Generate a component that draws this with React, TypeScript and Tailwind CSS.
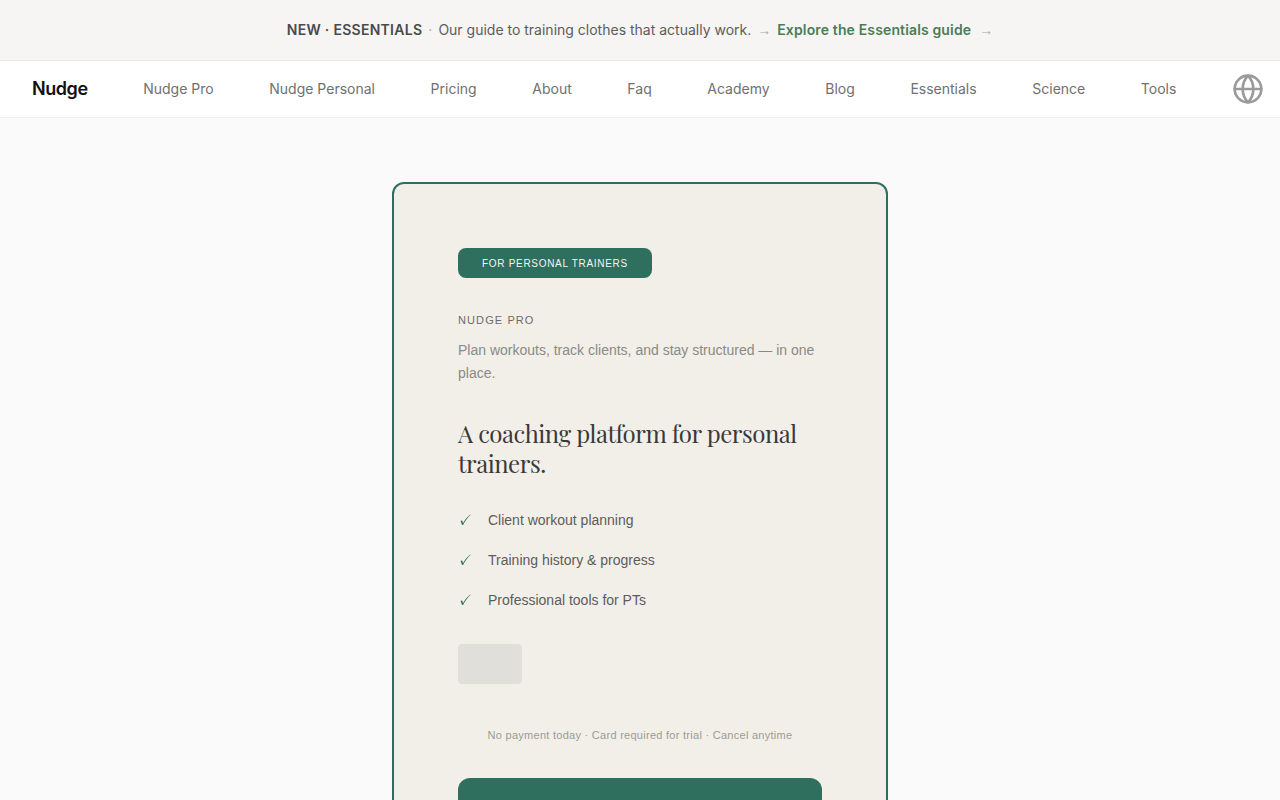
import { Globe } from "lucide-react";

const navLinks = [
  "Nudge Pro",
  "Nudge Personal",
  "Pricing",
  "About",
  "Faq",
  "Academy",
  "Blog",
  "Essentials",
  "Science",
  "Tools",
];

const features = [
  "Client workout planning",
  "Training history & progress",
  "Professional tools for PTs",
];

const CheckMark = () => {
  return (
    <svg
      viewBox="0 0 14 14"
      className="h-3.5 w-3.5 shrink-0 fill-[#2f6f5e]"
      aria-hidden="true"
    >
      <path d="M2.4 8.2 C3 7.2 4.2 7.2 4.5 8.2 L5 10.2 C6.8 7 9.2 4 12.3 1.6 L12.6 1.8 C9.6 4.8 7 8.2 5.2 11.8 L4 12 L3.2 9.4 C3 8.6 2.8 8.4 2.4 8.2 Z" />
    </svg>
  );
};

const AnnouncementBar = () => {
  return (
    <div className="flex items-center justify-center border-b border-[#ebebe8] bg-[#f6f5f3] px-4 py-5 text-sm text-[#5c5c5c]">
      <strong className="font-semibold tracking-[0.02em] text-[#4a4a4a]">
        NEW · ESSENTIALS
      </strong>
      <span className="mx-1.5 text-[#a8a8a8]">·</span>
      <span>Our guide to training clothes that actually work.</span>
      <span className="mx-1.5 font-['Liberation_Sans',sans-serif] text-[#a8a8a8]">
        →
      </span>
      <a
        href="#essentials"
        className="font-semibold tracking-[0.01em] text-[#4a7c59]"
      >
        Explore the Essentials guide
      </a>
      <span className="ml-2 font-['Liberation_Sans',sans-serif] text-[#a8a8a8]">
        →
      </span>
    </div>
  );
};

const Navbar = () => {
  return (
    <header className="border-b border-[#f0f0f0] bg-white">
      <nav className="flex h-14 items-center justify-between pr-4 pl-8 whitespace-nowrap">
        <a
          href="#home"
          className="text-lg font-semibold tracking-tight text-[#111111]"
        >
          Nudge
        </a>
        {navLinks.map((link) => (
          <a key={link} href="#" className="text-sm text-[#707070]">
            {link}
          </a>
        ))}
        <button
          type="button"
          aria-label="Language"
          className="shrink-0 text-[#9b9b9b]"
        >
          <Globe size={32} />
        </button>
      </nav>
    </header>
  );
};

const PlanCard = () => {
  return (
    <section className="w-full max-w-[496px] rounded-xl border-2 border-[#2f6f5e] bg-[#f2efe9] p-16 font-['Liberation_Sans',sans-serif]">
      <span className="inline-block rounded-lg bg-[#2f6f5e] px-6 pt-[9px] pb-[7px] text-[10px] leading-[14px] tracking-[0.07em] text-[#f7f5f2] uppercase">
        For personal trainers
      </span>
      <p className="mt-8 text-[11px] leading-5 tracking-widest text-[#6b6b6b] uppercase">
        Nudge Pro
      </p>
      <p className="mt-[9px] text-sm leading-[23px] text-[#8a8a85]">
        Plan workouts, track clients, and stay structured — in one place.
      </p>
      <h2 className="mt-[33px] font-['Playfair_Display','Liberation_Serif',serif] text-2xl leading-[30px] tracking-[-0.02em] text-[#3a3a3a]">
        A coaching platform for personal trainers.
      </h2>
      <ul className="mt-[30px] space-y-4 text-sm leading-6 text-[#5c5c5c]">
        {features.map((feature) => (
          <li key={feature} className="flex items-center gap-4">
            <CheckMark />
            {feature}
          </li>
        ))}
      </ul>
      <div className="mt-8 h-10 w-16 rounded bg-[#e1dfda]" />
      <p className="mt-10 text-center text-[11px] leading-[22px] tracking-wide text-[#9b9b95]">
        No payment today · Card required for trial · Cancel anytime
      </p>
      <button
        type="button"
        aria-label="Start trial"
        className="mt-8 h-14 w-full rounded-xl bg-[#2f6f5e]"
      />
    </section>
  );
};

const App = () => {
  return (
    <div className="h-screen overflow-hidden bg-[#fafafa] font-['Inter',sans-serif]">
      <AnnouncementBar />
      <Navbar />
      <main className="flex justify-center px-4 py-16">
        <PlanCard />
      </main>
    </div>
  );
};

export default App;
